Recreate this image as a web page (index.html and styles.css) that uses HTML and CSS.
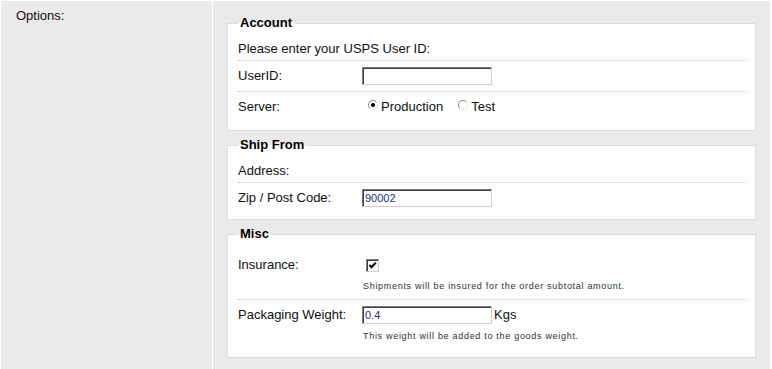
FILE: index.html
```html
<!DOCTYPE html>
<html lang="en">
<head>
    <meta charset="UTF-8">
    <meta name="viewport" content="width=device-width, initial-scale=1.0">
    <title>USPS Shipping Options</title>
    <link rel="stylesheet" href="styles.css">
</head>
<body>
    <div class="options">
        <div class="options-label">Options:</div>
        <div class="options-body">

            <fieldset class="group">
                <legend>Account</legend>
                <div class="row intro">Please enter your USPS User ID:</div>
                <div class="row">
                    <label class="field-label" for="userId">UserID:</label>
                    <div class="field">
                        <div class="control">
                            <input type="text" id="userId" class="text-input">
                        </div>
                    </div>
                </div>
                <div class="row">
                    <span class="field-label">Server:</span>
                    <div class="field">
                        <div class="control">
                            <label class="choice"><input type="radio" name="server" value="production" checked>Production</label>
                            <label class="choice"><input type="radio" name="server" value="test">Test</label>
                        </div>
                    </div>
                </div>
            </fieldset>

            <fieldset class="group compact">
                <legend>Ship From</legend>
                <div class="row intro">Address:</div>
                <div class="row">
                    <label class="field-label" for="zip">Zip / Post Code:</label>
                    <div class="field">
                        <div class="control">
                            <input type="text" id="zip" class="text-input" value="90002">
                        </div>
                    </div>
                </div>
            </fieldset>

            <fieldset class="group">
                <legend>Misc</legend>
                <div class="row">
                    <label class="field-label" for="insurance">Insurance:</label>
                    <div class="field">
                        <div class="control">
                            <span class="check">
                                <input type="checkbox" id="insurance" checked>
                                <svg width="13" height="13" viewBox="0 0 13 13"><path d="M3.5 6 L5.5 8.2 L9.8 3.6" fill="none" stroke="#000" stroke-width="2"/></svg>
                            </span>
                        </div>
                        <p class="hint">Shipments will be insured for the order subtotal amount.</p>
                    </div>
                </div>
                <div class="row">
                    <label class="field-label" for="weight">Packaging Weight:</label>
                    <div class="field">
                        <div class="control">
                            <input type="text" id="weight" class="text-input" value="0.4">
                            <span class="unit">Kgs</span>
                        </div>
                        <p class="hint">This weight will be added to the goods weight.</p>
                    </div>
                </div>
            </fieldset>

        </div>
    </div>
</body>
</html>
```

FILE: styles.css
```css
body {
    margin: 0;
    background: #fff;
    font-family: "Liberation Sans", Arial, sans-serif;
    font-size: 13px;
    color: #111;
}

.options {
    display: grid;
    grid-template-columns: 211px 1fr;
    column-gap: 1px;
    padding: 1px 2px 0 1px;
    min-height: 100vh;
    box-sizing: border-box;
}

.options-label,
.options-body {
    background: #ebe9e9;
}

.options-label {
    padding: 7px 15px;
    line-height: 15px;
}

.options-body {
    padding: 15px 14px 10px;
}

.group {
    margin: 0 0 7px;
    padding: 9px 9px 8px 10px;
    border: 1px solid #d9dfe0;
    background: #fdfdfd;
    min-width: 0;
}

.group.compact {
    padding-bottom: 6px;
}

.group legend {
    padding: 0 2px;
    font-weight: bold;
    line-height: 14px;
    color: #000;
}

.row {
    display: flex;
    align-items: flex-start;
    padding: 6px 0;
    line-height: 18px;
    border-bottom: 1px dotted #c8c8c8;
}

.row:last-child {
    border-bottom: 0;
}

.row.intro {
    display: block;
    padding: 3px 0 4px;
    line-height: 14px;
}

.field-label {
    width: 124px;
    flex: none;
}

.field {
    display: flex;
    flex-direction: column;
}

.control {
    display: flex;
    align-items: center;
    height: 18px;
}

.text-input {
    width: 130px;
    height: 18px;
    box-sizing: border-box;
    margin: 0;
    padding: 0 2px;
    border: 1px solid;
    border-color: #7b7b7b #d4d0c8 #d4d0c8 #7b7b7b;
    box-shadow: inset 1px 1px 0 #404040;
    background: #fff;
    font-family: "Liberation Sans", Arial, sans-serif;
    font-size: 11px;
    color: #22337a;
}

.unit {
    margin-left: 2px;
}

.choice {
    display: inline-flex;
    align-items: center;
    margin-right: 9px;
}

.choice input {
    appearance: none;
    width: 10px;
    height: 10px;
    margin: 0 3px 4px 6px;
    border: 1px solid;
    border-color: #8a8a8a #e4e4e4 #e4e4e4 #8a8a8a;
    border-radius: 50%;
    background: #fff;
}

.choice input:checked {
    background: radial-gradient(circle, #000 0 1.6px, #fff 2.2px);
}

.check {
    display: inline-grid;
    margin-left: 4px;
}

.check input,
.check svg {
    grid-area: 1 / 1;
}

.check input {
    appearance: none;
    width: 13px;
    height: 13px;
    margin: 0;
    border: 1px solid;
    border-color: #7b7b7b #d4d0c8 #d4d0c8 #7b7b7b;
    box-shadow: inset 1px 1px 0 #404040;
    background: #f4f4f4;
}

.check svg {
    pointer-events: none;
}

.hint {
    margin: 6px 0 0 1px;
    font-size: 9px;
    line-height: 13px;
    letter-spacing: 0.7px;
    color: #333;
}
```
